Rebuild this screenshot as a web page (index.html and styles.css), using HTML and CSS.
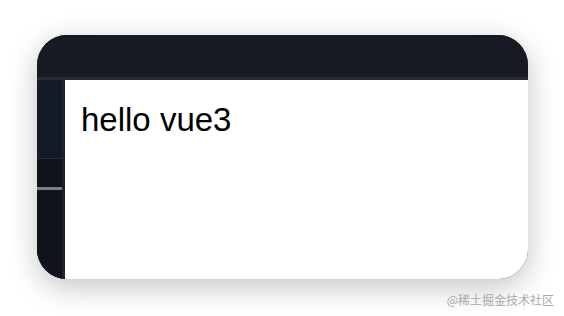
FILE: index.html
```html
<!DOCTYPE html>
<html>
<head>
<meta charset="utf-8">
<link rel="stylesheet" href="styles.css">
</head>
<body>
<div class="page">
  <div class="window">
    <div class="topbar"></div>
    <div class="main">
      <div class="sidebar">
        <div class="side-top"></div>
        <div class="side-panel">
          <div class="side-gap"></div>
          <div class="side-bar"></div>
        </div>
      </div>
      <div class="content">
        <h1 class="title">hello vue3</h1>
      </div>
    </div>
  </div>
  <div class="watermark">@稀土掘金技术社区</div>
</div>
</body>
</html>
```
FILE: styles.css
```css
html, body {
  margin: 0;
  padding: 0;
  background: #ffffff;
}
.page {
  width: 564px;
  height: 316px;
  padding: 35px 0 0 37px;
  box-sizing: border-box;
  overflow: hidden;
}
.window {
  width: 491px;
  height: 244px;
  border-radius: 30px;
  overflow: hidden;
  background: #161b24;
  box-shadow: 0 8px 30px rgba(0, 0, 0, 0.24);
  display: flex;
  flex-direction: column;
}
.topbar {
  height: 42px;
  flex: none;
  background: #161b24;
  border-bottom: 3px solid #282c33;
}
.main {
  flex: 1;
  display: flex;
  min-height: 0;
}
.sidebar {
  width: 25px;
  flex: none;
  background: #131926;
  border-right: 3px solid #1f242b;
  display: flex;
  flex-direction: column;
}
.side-top {
  height: 78px;
  flex: none;
}
.side-panel {
  flex: 1;
  background: #0f141c;
  border-top: 1px solid #2a2f37;
}
.side-gap {
  height: 28px;
}
.side-bar {
  height: 3px;
  background: #7c7e82;
}
.content {
  flex: 1;
  background: #ffffff;
  padding: 0 16px;
}
.title {
  margin: 21px 0 0 0;
  font-family: "Liberation Sans", Arial, sans-serif;
  font-weight: normal;
  font-size: 33px;
  color: #000000;
}
.watermark {
  margin-top: 12px;
  padding-right: 10px;
  text-align: right;
  font-family: "Noto Sans CJK SC", "Noto Sans", sans-serif;
  font-size: 12px;
  line-height: 17px;
  color: #a9a9a9;
}
```
